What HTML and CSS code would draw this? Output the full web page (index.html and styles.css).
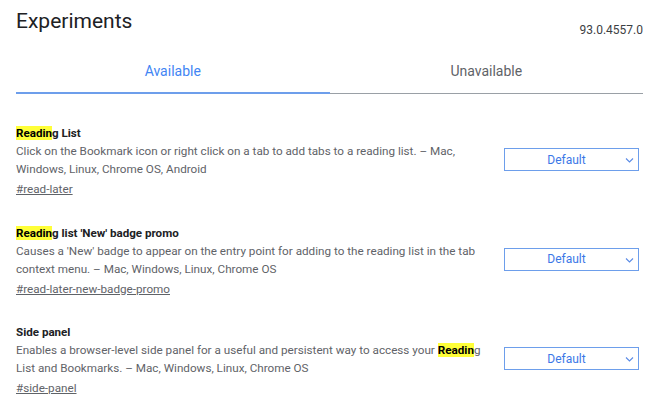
FILE: index.html
```html
<!DOCTYPE html>
<html>
<head>
<meta charset="utf-8">
<link rel="stylesheet" href="styles.css">
</head>
<body>
<div class="page">
  <header class="header">
    <h1 class="title">Experiments</h1>
    <span class="version">93.0.4557.0</span>
  </header>
  <nav class="tabs">
    <div class="tab tab-active">Available</div>
    <div class="tab">Unavailable</div>
  </nav>
  <div class="list">
    <div class="experiment">
      <div class="info">
        <div class="name"><mark class="hl">Readin</mark>g List</div>
        <p class="desc">Click on the Bookmark icon or right click on a tab to add tabs to a reading list. – Mac, Windows, Linux, Chrome OS, Android</p>
        <a class="link">#read-later</a>
      </div>
      <div class="select"><span class="select-text">Default</span><svg class="chev" width="9" height="6" viewBox="0 0 9 6"><path d="M1 1.5l3.5 3.5 3.5-3.5" fill="none" stroke="#5a8be6" stroke-width="1.1"/></svg></div>
    </div>
    <div class="experiment">
      <div class="info">
        <div class="name"><mark class="hl">Readin</mark>g list 'New' badge promo</div>
        <p class="desc">Causes a 'New' badge to appear on the entry point for adding to the reading list in the tab context menu. – Mac, Windows, Linux, Chrome OS</p>
        <a class="link">#read-later-new-badge-promo</a>
      </div>
      <div class="select"><span class="select-text">Default</span><svg class="chev" width="9" height="6" viewBox="0 0 9 6"><path d="M1 1.5l3.5 3.5 3.5-3.5" fill="none" stroke="#5a8be6" stroke-width="1.1"/></svg></div>
    </div>
    <div class="experiment">
      <div class="info">
        <div class="name">Side panel</div>
        <p class="desc">Enables a browser-level side panel for a useful and persistent way to access your <mark class="hl hl-bold">Readin</mark>g List and Bookmarks. – Mac, Windows, Linux, Chrome OS</p>
        <a class="link">#side-panel</a>
      </div>
      <div class="select"><span class="select-text">Default</span><svg class="chev" width="9" height="6" viewBox="0 0 9 6"><path d="M1 1.5l3.5 3.5 3.5-3.5" fill="none" stroke="#5a8be6" stroke-width="1.1"/></svg></div>
    </div>
  </div>
</div>
</body>
</html>
```
FILE: styles.css
```css
html, body {
  margin: 0;
  padding: 0;
  background: #fff;
}
body {
  font-family: Roboto, "Liberation Sans", sans-serif;
  color: #202124;
}
.page {
  padding: 0 25px 0 16px;
}
.header {
  display: flex;
  justify-content: space-between;
  align-items: flex-end;
  height: 40px;
}
.title {
  margin: 0;
  font-size: 21px;
  font-weight: 400;
  line-height: 26px;
  padding-bottom: 6px;
  color: #202124;
}
.version {
  font-size: 12px;
  color: #3c4043;
  line-height: 16px;
  padding-bottom: 2px;
}
.tabs {
  display: flex;
  margin-top: 22px;
}
.tab {
  flex: 1;
  text-align: center;
  font-size: 14px;
  line-height: 18px;
  padding-bottom: 13px;
  color: #5f6368;
  border-bottom: 1px solid #9aa0a6;
}
.tab-active {
  color: #4285f4;
  border-bottom: 2px solid #6d9eeb;
  padding-bottom: 12px;
}
.list {
  padding-top: 30px;
}
.experiment {
  display: flex;
  height: 99.5px;
  align-items: flex-start;
}
.info {
  width: 468px;
}
.name {
  font-size: 11.6px;
  font-weight: 700;
  line-height: 18px;
  color: #202124;
}
.hl {
  background: #ffff38;
  color: #000;
  padding: 0;
}
.hl-bold {
  font-weight: 700;
}
.desc {
  margin: 0;
  font-size: 11.7px;
  line-height: 18px;
  color: #5f6368;
}
.link {
  display: inline-block;
  font-size: 11.7px;
  line-height: 18px;
  color: #5f6368;
  text-decoration: underline;
}
.select {
  margin-left: auto;
  margin-right: 4px;
  margin-top: 24px;
  width: 135px;
  height: 23px;
  box-sizing: border-box;
  border: 1px solid #6d9eeb;
  display: flex;
  align-items: center;
  position: relative;
  padding-right: 10px;
  color: #3b78e7;
  font-size: 12px;
}
.select-text {
  flex: 1;
  text-align: center;
}
.chev {
  position: absolute;
  right: 4px;
  top: 8px;
}
```
